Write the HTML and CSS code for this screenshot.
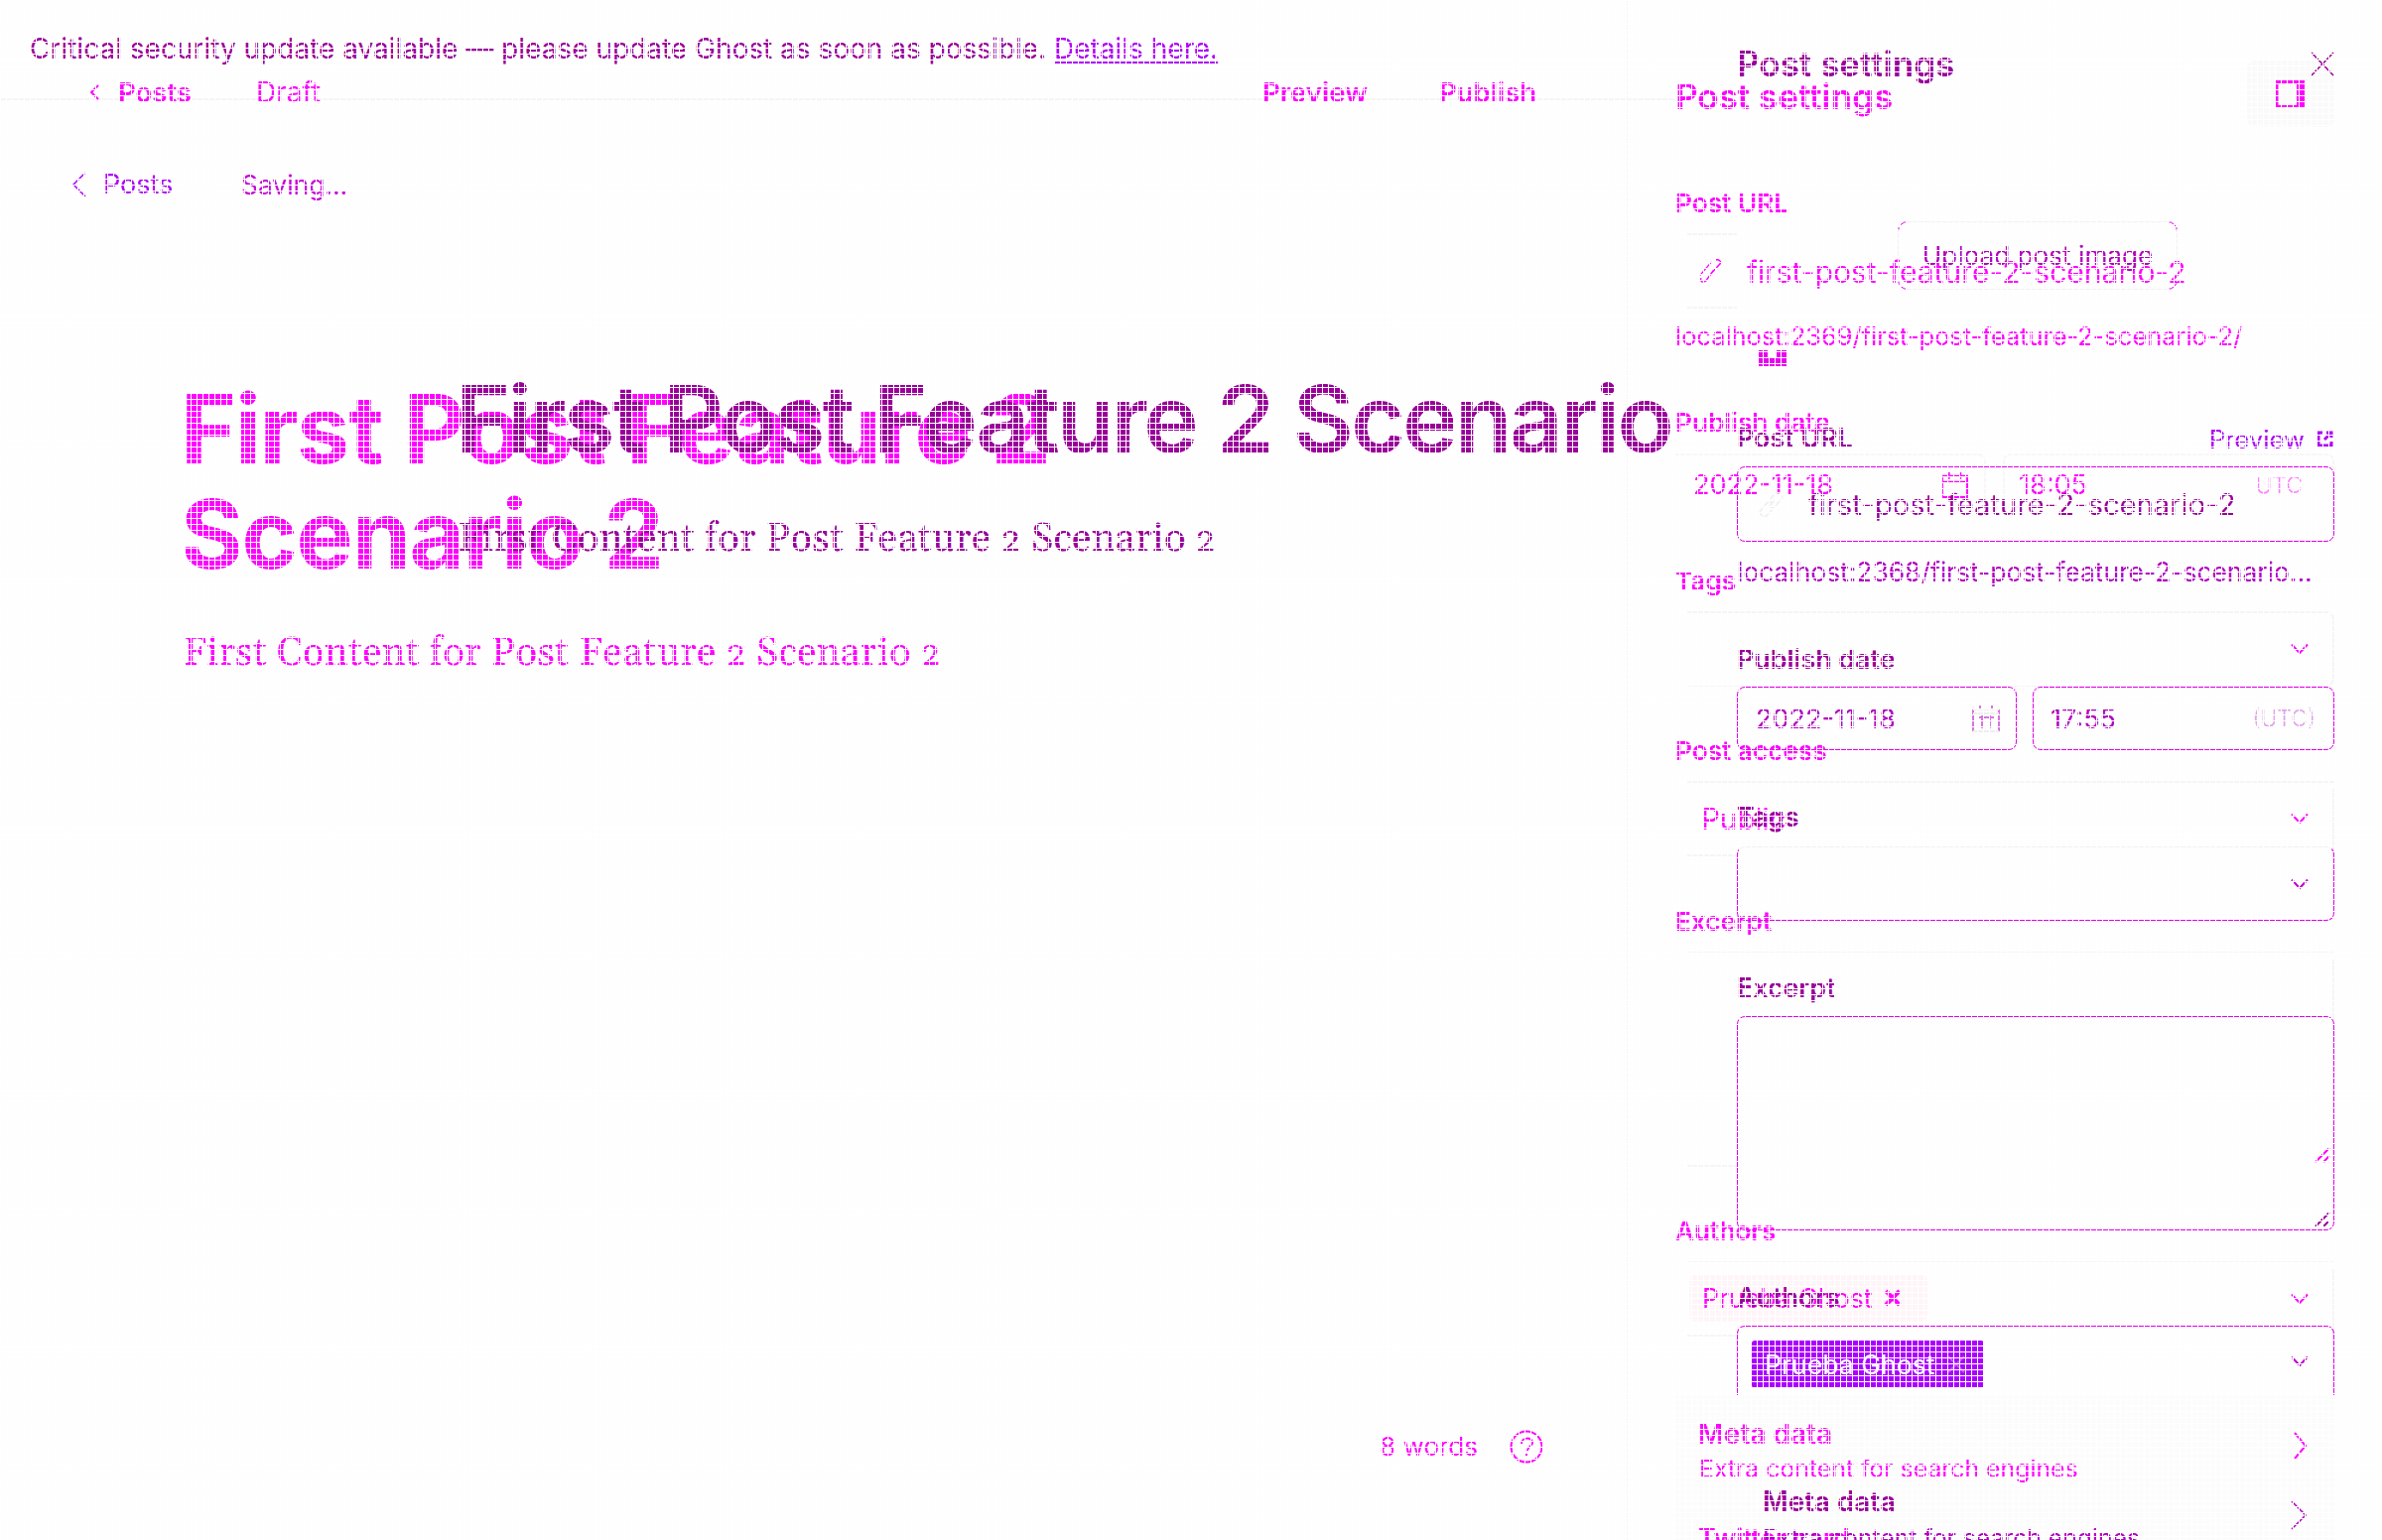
FILE: index.html
```html
<!DOCTYPE html>
<html lang="en">
<head>
<meta charset="utf-8">
<title>Post settings</title>
<link rel="stylesheet" href="styles.css">
</head>
<body>
<svg class="defs" width="0" height="0">
  <symbol id="down" viewBox="0 0 20 12"><path d="M2 1.500 10 10l8-8.500"/></symbol>
  <symbol id="link" viewBox="0 0 26 26"><path d="M10 16 17 8M12 7l5-5c2-2 4-2 6 0s2 4 0 6l-6 7c-2 1-4 1-5 0M14 19l-5 5c-2 2-4 2-6 0s-2-4 0-6l6-7c2-1 4-1 5 0"/></symbol>
  <symbol id="clip" viewBox="0 0 26 26"><path d="M2 17 14 3M18 1c4-1 6 1 5 4L12 17M3 20c-1 4 2 5 5 3l8-11"/></symbol>
  <symbol id="cal" viewBox="0 0 28 28"><path d="M1 5h26v22H1zM1 11h26M8 1v7M20 1v7"/></symbol>
  <symbol id="grip" viewBox="0 0 16 16"><path d="M1 15 15 1M9 15l6-6"/></symbol>
</svg>
<div class="stage">

  <div class="layer new">
    <main class="editor">
      <header class="bar">
        <svg class="ico" width="10" height="18" viewBox="0 0 10 18"><path d="M9 2 2 9l7 7"/></svg>
        <span class="semi">Posts</span><span class="draft">Draft</span>
        <span class="semi preview">Preview</span><span class="semi publish">Publish</span>
      </header>
      <h1 class="title">First Post Feature 2<br>Scenario 2</h1>
      <p class="content">First Content for Post Feature <small>2</small> Scenario <small>2</small></p>
      <footer class="words"><span>8 words</span>
        <svg class="ico" width="34" height="34" viewBox="0 0 34 34"><circle cx="17" cy="17" r="15.500"/><path d="M12 14c0-7 11-7 11-1 0 4-5 3-5 8M17 24v2"/></svg>
      </footer>
    </main>
    <aside class="panel">
      <div class="head"><h2>Post settings</h2>
        <button class="toggle"><svg class="ico" width="30" height="28" viewBox="0 0 30 28"><path d="M1 1.500h28v25H1z" stroke-width="3"/><path class="fill" d="M21 1h8v26h-8z"/></svg></button>
      </div>
      <label class="l1">Post URL</label>
      <div class="field url short"><svg class="ico thin" width="25" height="25"><use href="#clip"/></svg><span>first-post-feature-2-scenario-2</span></div>
      <div class="hint">localhost:2369/first-post-feature-2-scenario-2/</div>
      <label class="l2">Publish date</label>
      <div class="dates">
        <div class="half"><span>2022-11-18</span><svg class="ico" width="27" height="27"><use href="#cal"/></svg></div>
        <div class="half right"><span>18:05</span><i>UTC</i></div>
      </div>
      <label class="l3">Tags</label>
      <div class="field full sel"><svg class="ico" width="20" height="12"><use href="#down"/></svg></div>
      <label class="l4">Post access</label>
      <div class="field sel access"><span>Public</span><svg class="ico" width="20" height="12"><use href="#down"/></svg></div>
      <label class="l5">Excerpt</label>
      <div class="field area"><svg class="ico" width="16" height="16"><use href="#grip"/></svg></div>
      <label class="l6">Authors</label>
      <div class="field sel authors"><div class="token"><span>Prueba Ghost</span><svg class="ico" width="18" height="18" viewBox="0 0 17 17"><path d="m2 2 13 13M15 2 2 15" stroke-width="4"/></svg></div><svg class="ico" width="20" height="12"><use href="#down"/></svg></div>
      <div class="more">
        <div class="row"><div><b>Meta data</b><p>Extra content for search engines</p></div><svg class="ico" width="16" height="28" viewBox="0 0 16 28"><path d="m2 1 11 13L2 27"/></svg></div>
        <b class="next">Twitter card</b>
      </div>
    </aside>
  </div>

  <div class="layer old">
    <main class="editor">
      <div class="banner"><span>Critical security update available — please update Ghost as soon as possible.</span><a>Details here.</a></div>
      <header class="bar">
        <svg class="ico thin" width="16" height="26" viewBox="0 0 16 26"><path d="M14 1 2 13l12 12"/></svg>
        <span class="posts">Posts</span><span class="saving">Saving...</span>
      </header>
      <h1 class="title">First Post Feature 2 Scenario</h1>
      <p class="content">First Content for Post Feature <small>2</small> Scenario <small>2</small></p>
    </main>
    <aside class="panel">
      <div class="head"><h2>Post settings</h2><svg class="ico thin" width="24" height="25" viewBox="0 0 24 25"><path d="m1 1 22 23M23 1 1 24"/></svg></div>
      <div class="upload">Upload post image</div>
      <div class="trash"><svg width="28" height="16" viewBox="0 0 28 16"><path class="fill" d="M0 0h9v7h9V0h10v16H0z"/></svg></div>
      <div class="labels"><label>Post URL</label><a>Preview <svg class="ico" width="17" height="17" viewBox="0 0 17 17"><path d="M7 2H2v13h13v-4M10 2h5v5M15 2 8 9" stroke-width="3"/></svg></a></div>
      <div class="field url"><svg class="ico" width="25" height="25"><use href="#link"/></svg><span>first-post-feature-2-scenario-2</span></div>
      <div class="hint">localhost:2368/first-post-feature-2-scenario...</div>
      <label class="l2">Publish date</label>
      <div class="dates">
        <div class="half"><span>2022-11-18</span><svg class="ico" width="28" height="28" viewBox="0 0 28 28"><path d="M1 5v22M27 5v22M7 13h15M10 10v14M18 10v14M8 1v4M20 1v4"/><path class="pale" d="M1 5h26M1 9h26M1 27h26"/></svg></div>
        <div class="half"><span>17:55</span><i>(UTC)</i></div>
      </div>
      <label class="l3">Tags</label>
      <div class="field sel tags"><svg class="ico" width="20" height="12"><use href="#down"/></svg></div>
      <label class="l3">Excerpt</label>
      <div class="field area"><svg class="ico" width="16" height="16"><use href="#grip"/></svg></div>
      <label class="l3">Authors</label>
      <div class="field sel authors"><div class="token"><span>Prueba Ghost</span><svg class="ico" width="18" height="18" viewBox="0 0 18 18"><path d="m1 1 16 16M17 1 1 17"/></svg></div><svg class="ico" width="20" height="12"><use href="#down"/></svg></div>
      <div class="row"><div><b>Meta data</b><p>Extra content for search engines</p></div><svg class="ico thin" width="18" height="30" viewBox="0 0 18 30"><path d="m1 1 14 14L1 29"/></svg></div>
    </aside>
  </div>

  <div class="mesh"></div>
</div>
</body>
</html>
```
FILE: styles.css
```css
* { box-sizing: border-box; }
body { margin: 0; background: #fefefe; font: 400 26px/40px Inter, "Liberation Sans", sans-serif; }
h1, h2, p { margin: 0; }
h2 { font-size: 35px; font-weight: 600; line-height: 40px; }
label, b { display: block; font-weight: 600; height: 40px; flex: none; }
i { font-style: normal; }
button { border: 0; padding: 0; }
span, a, label, b, p, h1, h2, .hint { white-space: nowrap; }
.defs { display: block; height: 0; }

/* both revisions share one grid cell, with the mesh over them */
.stage { display: grid; width: 2400px; height: 1552px; overflow: hidden; }
.layer, .mesh { grid-area: 1 / 1; min-width: 0; min-height: 0; height: 1552px; }
.mesh {
  z-index: 2;
  background-image: linear-gradient(90deg, #fff 1px, transparent 1px), linear-gradient(#fff 1px, transparent 1px);
  background-size: 6px 6px;
}
.layer { display: grid; overflow: hidden; }
.panel { display: flex; flex-direction: column; min-width: 0; }
.ico { fill: none; stroke: currentColor; stroke-width: 2; flex: none; }
.thin { stroke-width: 1.500; }
.fill { fill: currentColor; stroke: none; }
.field, .dates { display: flex; align-items: center; flex: none; }
.dates { align-items: stretch; font-size: 27px; }
.half { display: flex; align-items: center; justify-content: space-between; }
.half span { padding-top: 1px; }
.sel { justify-content: flex-end; padding-right: 25px; }
.area { align-items: flex-end; justify-content: flex-end; padding: 0 4px 4px 0; }
.row { display: flex; justify-content: space-between; }
.token { display: flex; align-items: center; margin-right: auto; font-size: 26.600px; }
.content { font: 40px/60px Gelasio, Georgia, "Liberation Serif", serif; letter-spacing: .35px; }
.content small { font-size: 35px; }

/* current revision */
.new { grid-template-columns: 1640px 712px; color: #f0f; }
.new .editor { border-right: 2px solid #f7f7f7; display: flex; flex-direction: column; }
.new .bar {
  height: 101px; padding: 73px 0 0 90px; flex: none; width: 1688px;
  border-bottom: 2px solid #f5f5f5; display: grid; font-size: 27.500px;
  grid-template-columns: 29px 139px 1014px 178px 200px; line-height: 40px; align-items: center;
}
.new .bar > * { margin-bottom: -14px; }
.draft { font-size: 28px; }
.semi { font-weight: 600; }
.new .title { margin-top: 279px; padding-left: 182px; font-size: 96px; line-height: 105.600px; font-weight: 700; letter-spacing: -1.450px; }
.new .content { margin-top: 38px; padding-left: 184px; }
.words { margin-top: auto; padding: 0 83px 77px 0; display: flex; justify-content: flex-end; align-items: center; gap: 32px; height: 111px; }
.new .panel { padding-left: 48px; }
.new .head { display: flex; justify-content: space-between; height: 128px; flex: none; }
.new h2 { margin-top: 77px; }
.toggle { margin-top: 61px; width: 88px; height: 67px; background: #fafafa; border-radius: 8px; color: #f0f; display: flex; align-items: center; justify-content: center; }
.new label { font-size: 26.200px; }
.l1 { margin-top: 57px; }
.new .field {
  background: linear-gradient(#f5f5f5, #f5f5f5) 12px 0 / 652px 2px no-repeat,
    linear-gradient(#f5f5f5, #f5f5f5) 12px 100% / 50px 2px no-repeat,
    linear-gradient(#f5f5f5, #f5f5f5) 100% 8px / 2px 100% no-repeat;
}
.new .full { background: none; border: 2px solid #f5f5f5; border-left: 0; border-radius: 0 8px 8px 0; margin-left: 12px; padding-right: 23px; }
.new .url {
  margin-top: 10px; height: 76px; padding-left: 23px; gap: 24px; font-size: 30px;
  background: linear-gradient(#f5f5f5, #f5f5f5) 12px 0 / 50px 2px no-repeat,
    linear-gradient(#f5f5f5, #f5f5f5) 12px 100% / 50px 2px no-repeat;
}
.new .url span { padding-top: 1px; }
.new .hint { margin-top: 8px; font-size: 25.400px; }
.new .l2 { margin-top: 47px; }
.new .dates { margin-top: 11px; height: 62px; gap: 17px; }
.new .half { width: 313px; padding: 0 16px 0 18px; border: 2px solid #f7f7f7; border-left: 0; border-bottom: 0; border-radius: 0 8px 0 0; }
.new .half svg { margin-top: -2px; }
.new .half span { padding-top: 0; }
.new .right { width: 334px; border-left: 2px solid #f7f7f7; border-radius: 8px 8px 0 0; padding: 0 30px 0 14px; }
.new i { font-size: 23px; font-weight: 300; opacity: .5; }
.new .l3 { margin-top: 47px; }
.new .sel { height: 76px; margin-top: 10px; }
.new .l4 { margin-top: 45px; }
.access span { margin-right: auto; padding-left: 26px; font-size: 29.500px; }
.new .l5 { margin-top: 46px; }
.new .area { margin-top: 10px; height: 217px; }
.new .l6 { margin-top: 45px; }
.new .token { margin-left: 14px; margin-top: -2px; width: 240px; height: 47px; padding-left: 13px; gap: 12px; background: #fff5f8; border-radius: 6px; }
.new .more { margin-top: 60px; height: 145px; flex: none; background: #fcfcfc; padding: 18px 26px 0 23px; }
.new .more b { font-size: 28px; }
.new .more p { margin-top: -5px; padding-left: 1px; font-size: 24.800px; }
.new .row svg { margin-top: 18px; }
.new .more .next { margin-top: 31px; font-size: 27px; letter-spacing: -.3px; }

/* earlier revision */
.old { grid-template-columns: 1750px 602px; color: #909; z-index: 1; }
.old a { color: #ae00f4; }
.banner { display: grid; grid-template-columns: 1032px 1fr; padding: 29px 0 0 30px; font-size: 28px; }
.banner a { text-decoration: underline; text-decoration-thickness: 2px; text-underline-offset: 3px; justify-self: start; }
.old .bar { display: grid; grid-template-columns: 32px 139px 1fr; align-items: center; margin-top: 97px; padding-left: 72px; height: 40px; color: #ae00f4; }
.posts { font-size: 27px; }
.saving { color: #c800d8; font-size: 26.400px; }
.old .title { margin-top: 156px; padding-left: 459px; font-size: 94px; line-height: 120px; font-weight: 600; letter-spacing: -2.750px; }
.old .content { margin-top: 32px; padding-left: 461px; }
.old .head, .labels { display: flex; justify-content: space-between; align-items: center; }
.old .head { margin-top: 44px; height: 40px; }
.upload { position: relative; margin: 139px 0 0 162px; width: 282px; height: 69px; border: 1px solid #e200ea; border-radius: 10px; color: #b000bc; line-height: 67px; text-align: center; font-size: 26.200px; }
.upload::before {
  content: ""; position: absolute; inset: -1px;
  background: linear-gradient(#f3f0f3, #f3f0f3) 50% 0 / 266px 1px no-repeat,
    linear-gradient(#f3f0f3, #f3f0f3) 50% 100% / 266px 1px no-repeat,
    linear-gradient(#f3f0f3, #f3f0f3) 0 50% / 1px 53px no-repeat,
    linear-gradient(#f3f0f3, #f3f0f3) 100% 50% / 1px 53px no-repeat;
}
.trash { margin-top: 61px; height: 16px; padding-left: 22px; color: #e800f0; display: flex; }
.old label { font-size: 26.800px; }
.labels { margin-top: 52px; height: 40px; }
.labels a { display: flex; align-items: center; gap: 12px; padding: 3px 1px 0 0; font-size: 25.700px; }
.old .field, .old .half { border: 1px solid #e200ea; border-radius: 8px; }
.old .field { color: #c000cc; }
.old .url { margin-top: 9px; height: 76px; padding-left: 21px; gap: 25px; color: #909; font-size: 29.200px; }
.old .url span { padding-top: 2px; }
.old .url svg { color: #f1f1f1; }
.old .hint { margin-top: 10px; color: #b000c0; font-size: 26.400px; height: 40px; }
.old .l2 { margin-top: 48px; }
.old .dates { margin-top: 8px; height: 64px; gap: 16px; color: #b000c0; }
.old .half { width: 282px; padding: 0 16px 0 18px; }
.old .half + .half { width: 304px; padding: 0 18px 0 17px; }
.old .half svg { color: #d873df; }
.old .half .pale { stroke: #eee; }
.old i { color: #e2a0e8; font-size: 23px; font-weight: 300; }
.old .l3 { margin-top: 47px; }
.old .tags { margin-top: 10px; height: 75px; border-top-color: #f3f0f3; }
.old .sel { padding-right: 24px; }
.old .area { margin-top: 9px; height: 216px; padding: 0 3px 2px 0; color: #909; }
.old .authors { margin-top: 9px; height: 70px; border-bottom: 0; border-radius: 8px 8px 0 0; }
.old .token { margin-left: 14px; width: 234px; height: 48px; margin-top: 6px; padding-left: 13px; gap: 13px; background: #aa00ff; color: #fff; border-radius: 3px; }
.old .token svg { opacity: .35; }
.old .row { margin-top: 87px; padding: 0 26px 0 26px; color: #b000c0; }
.old .row b { color: #909; font-size: 27.800px; }
.old .row p { margin-top: -3px; font-size: 24.700px; }
.old .row svg { margin-top: 19px; }
```
